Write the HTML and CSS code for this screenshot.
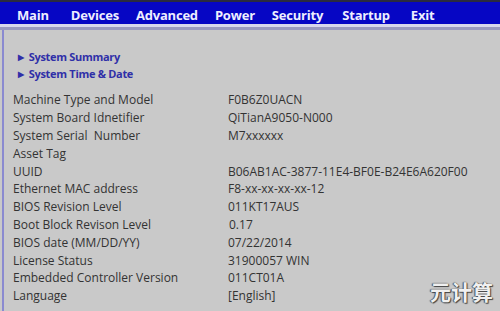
FILE: index.html
```html
<!DOCTYPE html>
<html lang="en">
<head>
    <meta charset="UTF-8">
    <title>BIOS Setup - Main</title>
    <link rel="stylesheet" href="styles.css">
</head>
<body>
    <div class="screen">
        <div class="menu-bar">
            <span class="menu-item">Main</span>
            <span class="menu-item">Devices</span>
            <span class="menu-item">Advanced</span>
            <span class="menu-item">Power</span>
            <span class="menu-item">Security</span>
            <span class="menu-item">Startup</span>
            <span class="menu-item">Exit</span>
        </div>
        <div class="menu-rule"></div>

        <div class="panel">
            <div class="links">
                <div class="link"><span class="arrow">&#9654;</span>System Summary</div>
                <div class="link"><span class="arrow">&#9654;</span>System Time &amp; Date</div>
            </div>

            <div class="info">
                <div class="label">Machine Type and Model</div><div class="value">F0B6Z0UACN</div>
                <div class="label">System Board Idnetifier</div><div class="value">QiTianA9050-N000</div>
                <div class="label">System Serial  Number</div><div class="value">M7xxxxxx</div>
                <div class="label">Asset Tag</div><div class="value"></div>
                <div class="label">UUID</div><div class="value">B06AB1AC-3877-11E4-BF0E-B24E6A620F00</div>
                <div class="label">Ethernet MAC address</div><div class="value">F8-xx-xx-xx-xx-12</div>
                <div class="label">BIOS Revision Level</div><div class="value">011KT17AUS</div>
                <div class="label">Boot Block Revison Level</div><div class="value shift">0.17</div>
                <div class="label">BIOS date (MM/DD/YY)</div><div class="value">07/22/2014</div>
                <div class="label">License Status</div><div class="value">31900057 WIN</div>
                <div class="label">Embedded Controller Version</div><div class="value">011CT01A</div>
                <div class="label">Language</div><div class="value">[English]</div>
            </div>
        </div>

        <div class="watermark">元计算</div>
    </div>
</body>
</html>
```

FILE: styles.css
```css
html, body {
    margin: 0;
    padding: 0;
}

body {
    font-family: "Open Sans", "Noto Sans", sans-serif;
    background-color: #c9c9c9;
    width: 500px;
    height: 311px;
    overflow: hidden;
}

.screen {
    position: relative;
    height: 311px;
    border-top: 2px solid #2a2a40;
    box-sizing: border-box;
}

.menu-bar {
    display: flex;
    align-items: flex-end;
    height: 22px;
    padding-left: 17px;
    padding-bottom: 1px;
    box-sizing: border-box;
    gap: 17px;
    background-color: #0606c4;
    color: #eeeeff;
    font-size: 13px;
    font-weight: bold;
    letter-spacing: -0.2px;
    line-height: 16px;
}

.menu-item:first-child {
    margin-right: 5px;
}

.menu-bar .menu-item:nth-child(6) {
    margin-left: 2px;
}

.menu-bar .menu-item:nth-child(7) {
    margin-left: 4px;
}

.menu-rule {
    height: 3px;
    background-color: #d8d8ec;
    border-bottom: 3px solid #9a9ac0;
}

.panel {
    margin-left: 2px;
    border-left: 2px solid #8a8ad0;
    height: 284px;
    padding-left: 9px;
    padding-top: 18px;
    box-sizing: border-box;
}

.links {
    padding-left: 5px;
    margin-bottom: 9px;
}

.link {
    color: #2f2fa8;
    font-size: 11px;
    font-weight: bold;
    line-height: 17px;
    letter-spacing: -0.3px;
}

.arrow {
    font-size: 8px;
    margin-right: 5px;
    vertical-align: 1px;
}

.info {
    display: grid;
    grid-template-columns: 215px auto;
    grid-auto-rows: 17.8px;
    color: #333333;
    font-size: 12px;
    align-items: center;
}

.label {
    white-space: pre;
}

.shift {
    padding-left: 1px;
}

.watermark {
    position: absolute;
    right: 7px;
    bottom: 5px;
    font-family: "Noto Sans CJK SC", sans-serif;
    font-size: 21px;
    font-weight: bold;
    color: #f0f0f0;
    text-shadow: 0 0 1px #333, 1px 1px 1px #444, -1px 0 1px #555;
}
```
